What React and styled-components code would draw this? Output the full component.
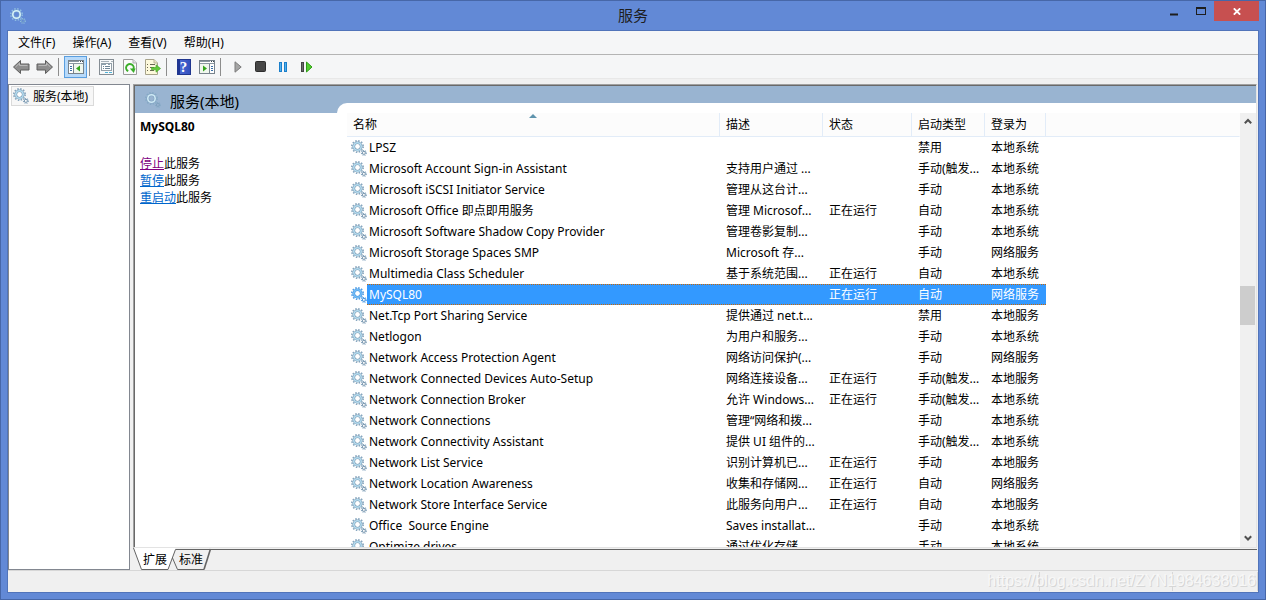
import React from 'react';
import styled, { createGlobalStyle, css } from 'styled-components';

const services = [
	{ name: 'LPSZ', description: '', status: '', startup: '禁用', account: '本地系统' },
	{ name: 'Microsoft Account Sign-in Assistant', description: '支持用户通过 ...', status: '', startup: '手动(触发...', account: '本地系统' },
	{ name: 'Microsoft iSCSI Initiator Service', description: '管理从这台计...', status: '', startup: '手动', account: '本地系统' },
	{ name: 'Microsoft Office 即点即用服务', description: '管理 Microsof...', status: '正在运行', startup: '自动', account: '本地系统' },
	{ name: 'Microsoft Software Shadow Copy Provider', description: '管理卷影复制...', status: '', startup: '手动', account: '本地系统' },
	{ name: 'Microsoft Storage Spaces SMP', description: 'Microsoft 存...', status: '', startup: '手动', account: '网络服务' },
	{ name: 'Multimedia Class Scheduler', description: '基于系统范围...', status: '正在运行', startup: '自动', account: '本地系统' },
	{ name: 'MySQL80', description: '', status: '正在运行', startup: '自动', account: '网络服务' },
	{ name: 'Net.Tcp Port Sharing Service', description: '提供通过 net.t...', status: '', startup: '禁用', account: '本地服务' },
	{ name: 'Netlogon', description: '为用户和服务...', status: '', startup: '手动', account: '本地系统' },
	{ name: 'Network Access Protection Agent', description: '网络访问保护(...', status: '', startup: '手动', account: '网络服务' },
	{ name: 'Network Connected Devices Auto-Setup', description: '网络连接设备...', status: '正在运行', startup: '手动(触发...', account: '本地服务' },
	{ name: 'Network Connection Broker', description: '允许 Windows...', status: '正在运行', startup: '手动(触发...', account: '本地系统' },
	{ name: 'Network Connections', description: '管理“网络和拨...', status: '', startup: '手动', account: '本地系统' },
	{ name: 'Network Connectivity Assistant', description: '提供 UI 组件的...', status: '', startup: '手动(触发...', account: '本地系统' },
	{ name: 'Network List Service', description: '识别计算机已...', status: '正在运行', startup: '手动', account: '本地服务' },
	{ name: 'Network Location Awareness', description: '收集和存储网...', status: '正在运行', startup: '自动', account: '网络服务' },
	{ name: 'Network Store Interface Service', description: '此服务向用户...', status: '正在运行', startup: '自动', account: '本地服务' },
	{ name: 'Office  Source Engine', description: 'Saves installat...', status: '', startup: '手动', account: '本地系统' },
	{ name: 'Optimize drives', description: '通过优化存储...', status: '', startup: '手动', account: '本地系统' },
];

const menus = ['文件(F)', '操作(A)', '查看(V)', '帮助(H)'];

function GearIcon({ tone = 'normal' }) {
	const tones = {
		normal: { teeth: '#86a6bf', ring: '#b4dcf0', edge: '#7796ae', hole: '#fff' },
		selected: { teeth: '#4f9ee6', ring: '#74bff8', edge: '#3f8fdc', hole: '#fff' },
		header: { teeth: '#86aac6', ring: '#cfeaf6', edge: '#7fa2bf', hole: '#99b4d1' },
		title: { teeth: '#8fbce2', ring: '#d6f2fa', edge: '#78a4cc', hole: '#6289d6' },
	};
	const c = tones[tone];

	return (
		<svg width='16' height='16' viewBox='0 0 16 16' aria-hidden='true'>
			<circle cx='6.5' cy='6.5' r='5.7' fill='none' stroke={c.teeth} strokeWidth='1.6' strokeDasharray='1.5 1.484' />
			<circle cx='6.5' cy='6.5' r='5' fill={c.edge} />
			<circle cx='6.5' cy='6.5' r='4.5' fill={c.ring} />
			<circle cx='6.5' cy='6.5' r='2.9' fill={c.edge} />
			<circle cx='6.5' cy='6.5' r='2.4' fill={c.hole} />
			<circle cx='12.9' cy='12.9' r='2.4' fill='none' stroke={c.teeth} strokeWidth='1.2' strokeDasharray='1 0.885' />
			<circle cx='12.9' cy='12.9' r='1.5' fill={c.hole} stroke={c.edge} strokeWidth='1' />
		</svg>
	);
}

function ArrowIcon({ flip }) {
	return (
		<svg width='17' height='16' viewBox='0 0 17 16' aria-hidden='true'>
			<path
				d='M0.5 8 L7.5 1.5 V5 H16 V11 H7.5 V14.5 Z'
				transform={flip ? 'matrix(-1 0 0 1 17 0)' : undefined}
				fill='#8e8e8e'
				stroke='#5e5e5e'
			/>
			<path
				d='M2.5 8 L6.5 4.2 V6.4 H14.5'
				transform={flip ? 'matrix(-1 0 0 1 17 0)' : undefined}
				fill='none'
				stroke='#bdbdbd'
			/>
		</svg>
	);
}

function PaneIcon({ actions }) {
	return (
		<svg width='16' height='14' viewBox='0 0 16 14' shapeRendering='crispEdges' aria-hidden='true'>
			<rect x='0.5' y='0.5' width='15' height='13' fill='#fff' stroke='#78838c' />
			<path d='M1 1.5H11M1 3.5H15' stroke='#8b98a2' />
			<path d='M12 1.5H13M14 1.5H15' stroke='#3c4850' />
			<path d={actions ? 'M10.5 4V13' : 'M5.5 4V13'} stroke='#78838c' />
			<path
				d={actions ? 'M12 6.5H14M12 8.5H14M12 10.5H14' : 'M2 6.5H4M2 8.5H4M2 10.5H4'}
				stroke='#3a6fa8'
			/>
			<rect x={actions ? 1 : 6} y='4' width='9' height='9' fill='#f0f7ee' />
			<path
				d={actions ? 'M4 5.5L8 8.5L4 11.5Z' : 'M12 5.5L8 8.5L12 11.5Z'}
				fill='#35a51d'
				shapeRendering='auto'
			/>
		</svg>
	);
}

function PropertiesIcon() {
	return (
		<svg width='16' height='16' viewBox='0 0 16 16' shapeRendering='crispEdges' aria-hidden='true'>
			<rect x='0.5' y='0.5' width='14' height='15' fill='#f7f9fa' stroke='#858d94' />
			<path d='M2 2.5H10M12 2.5H14' stroke='#a8b2b9' />
			<rect x='2.5' y='4.5' width='10' height='7' fill='#fff' stroke='#93a0a9' />
			<path d='M3 5.5H7M9 5.5H11' stroke='#8aa0ae' />
			<path d='M4 7.5H5M6 7.5H11M4 9.5H5M6 9.5H11' stroke='#6f8797' />
			<path d='M6 13.5H9M10 13.5H13' stroke='#4fb2d8' />
		</svg>
	);
}

function RefreshIcon() {
	return (
		<svg width='14' height='16' viewBox='0 0 14 16' aria-hidden='true'>
			<path d='M0.5 0.5H10L13.5 4V15.5H0.5Z' fill='#fbfbfb' stroke='#9b9b9b' />
			<path d='M10 0.5V4H13.5' fill='#e4e4e4' stroke='#b0b0b0' />
			<path d='M5.2 12.2A3.8 3.8 0 1 1 10.3 10.5' fill='none' stroke='#3cae2b' strokeWidth='2' />
			<path d='M6.8 9.5L12.6 9.5L10.8 14Z' fill='#3cae2b' />
		</svg>
	);
}

function ExportIcon() {
	return (
		<svg width='16' height='16' viewBox='0 0 16 16' aria-hidden='true'>
			<path d='M0.5 0.5H9L12.5 4V15.5H0.5Z' fill='#fdf9dc' stroke='#a8a48c' />
			<path d='M9 0.5V4H12.5' fill='#efe8be' stroke='#b9b49a' />
			<path d='M2 5.5H3M5 5.5H10M2 8.5H3M5 8.5H9M2 11.5H3M5 11.5H9' stroke='#6a6654' />
			<path d='M6.5 8.5H11V5.8L15.6 9.5L11 13.2V10.8H6.5Z' fill='#63c93a' stroke='#43a526' strokeWidth='0.6' />
		</svg>
	);
}

function HelpIcon() {
	return (
		<HelpBadge aria-hidden='true'>?</HelpBadge>
	);
}

function PlayIcon() {
	return (
		<svg width='8' height='12' viewBox='0 0 8 12' aria-hidden='true'>
			<path d='M1 0.8L7.2 6L1 11.2Z' fill='#a5a5a5' stroke='#7c7c7c' />
		</svg>
	);
}

function StopIcon() {
	return (
		<svg width='11' height='11' viewBox='0 0 11 11' aria-hidden='true'>
			<rect x='0.5' y='0.5' width='10' height='10' rx='1' fill='#474747' stroke='#2d2d2d' />
		</svg>
	);
}

function PauseIcon() {
	return (
		<svg width='9' height='10' viewBox='0 0 9 10' shapeRendering='crispEdges' aria-hidden='true'>
			<path d='M0 0H3V10H0ZM5 0H8V10H5Z' fill='#1b7fca' />
			<path d='M1.5 1V9M6.5 1V9' stroke='#4fb0ee' />
		</svg>
	);
}

function RestartIcon() {
	return (
		<svg width='12' height='12' viewBox='0 0 12 12' aria-hidden='true'>
			<rect x='0.5' y='1.5' width='2' height='9' fill='#6b6b6b' stroke='#444' />
			<path d='M5.5 1L11 6L5.5 11Z' fill='#52cf2f' stroke='#2f9e17' />
		</svg>
	);
}

function Chevron({ down }) {
	return (
		<svg width='8' height='7' viewBox='0 0 8 7' aria-hidden='true'>
			<path d={down ? 'M0.8 1.3L4 4.5L7.2 1.3' : 'M0.8 5.2L4 2L7.2 5.2'} fill='none' stroke='#505050' strokeWidth='2' />
		</svg>
	);
}

function TitleBar() {
	return (
		<TitleBarWrapper>
			<TitleSide>
				<GearIcon tone='title' />
			</TitleSide>
			<h1>服务</h1>
			<TitleSide $end>
				<WindowButton aria-label='最小化'>
					<svg width='8' height='9' viewBox='0 0 8 9'>
						<path d='M0 7.5H8' stroke='#1e1e1e' strokeWidth='2' />
					</svg>
				</WindowButton>
				<WindowButton aria-label='最大化'>
					<svg width='10' height='8' viewBox='0 0 10 8' shapeRendering='crispEdges'>
						<path d='M0.5 0V8M9.5 0V8M0 7.5H10' stroke='#1e1e1e' fill='none' />
						<path d='M0 1H10' stroke='#1e1e1e' strokeWidth='2' />
					</svg>
				</WindowButton>
				<WindowButton $close aria-label='关闭'>
					<svg width='8' height='7' viewBox='0 0 8 7'>
						<path d='M0.8 0.3L7.2 6.7M7.2 0.3L0.8 6.7' stroke='#fff' strokeWidth='1.8' />
					</svg>
				</WindowButton>
			</TitleSide>
		</TitleBarWrapper>
	);
}

function Toolbar() {
	return (
		<ToolbarWrapper>
			<ToolButton aria-label='后退'><ArrowIcon /></ToolButton>
			<ToolButton aria-label='前进'><ArrowIcon flip /></ToolButton>
			<Separator />
			<ToolButton $active aria-label='显示/隐藏控制台树'><PaneIcon /></ToolButton>
			<Separator />
			<ToolButton aria-label='属性'><PropertiesIcon /></ToolButton>
			<ToolButton aria-label='刷新'><RefreshIcon /></ToolButton>
			<ToolButton aria-label='导出列表'><ExportIcon /></ToolButton>
			<Separator />
			<ToolButton aria-label='帮助'><HelpIcon /></ToolButton>
			<ToolButton aria-label='显示/隐藏操作窗格'><PaneIcon actions /></ToolButton>
			<Separator />
			<ToolButton aria-label='启动服务'><PlayIcon /></ToolButton>
			<ToolButton aria-label='停止服务'><StopIcon /></ToolButton>
			<ToolButton aria-label='暂停服务'><PauseIcon /></ToolButton>
			<ToolButton aria-label='重启动服务'><RestartIcon /></ToolButton>
		</ToolbarWrapper>
	);
}

function ServiceTable({ selected, onSelect }) {
	return (
		<Table>
			<colgroup>
				<Column $width={373} />
				<Column $width={103} />
				<Column $width={89} />
				<Column $width={73} />
				<Column $width={61} />
				<Column />
			</colgroup>
			<thead>
				<tr>
					<HeadCell>
						名称
						<SortMark width='8' height='4' viewBox='0 0 8 4' aria-hidden='true'>
							<path d='M0 4L4 0L8 4Z' fill='#5f94ad' />
						</SortMark>
					</HeadCell>
					<HeadCell>描述</HeadCell>
					<HeadCell>状态</HeadCell>
					<HeadCell>启动类型</HeadCell>
					<HeadCell>登录为</HeadCell>
					<HeadCell as='td' $last />
				</tr>
			</thead>
			<tbody>
				{services.map(service => {
					const active = service.name === selected;
					return (
						<tr key={service.name} onClick={() => onSelect(service.name)}>
							<NameCell>
								<div>
									<GearIcon tone={active ? 'selected' : 'normal'} />
									<NameLabel $active={active}>{service.name}</NameLabel>
								</div>
							</NameCell>
							<Cell $active={active}>{service.description}</Cell>
							<Cell $active={active}>{service.status}</Cell>
							<Cell $active={active}>{service.startup}</Cell>
							<Cell $active={active}>{service.account}</Cell>
							<Cell />
						</tr>
					);
				})}
			</tbody>
		</Table>
	);
}

export default function App() {
	const [selected, setSelected] = React.useState('MySQL80');

	return (
		<Window>
			<GlobalStyle />
			<TitleBar />
			<Client>
				<MenuBar>
					{menus.map(menu => <MenuButton key={menu}>{menu}</MenuButton>)}
				</MenuBar>
				<Toolbar />
				<Workspace>
					<Tree>
						<TreeItem>
							<GearIcon />
							服务(本地)
						</TreeItem>
					</Tree>
					<Main>
						<Panel>
							<Details>
								<DetailsTitle>
									<GearIcon tone='header' />
									<h2>服务(本地)</h2>
								</DetailsTitle>
								<DetailsBody>
									<h3>{selected}</h3>
									<p><ActionLink href='#stop' $visited>停止</ActionLink>此服务</p>
									<p><ActionLink href='#pause'>暂停</ActionLink>此服务</p>
									<p><ActionLink href='#restart'>重启动</ActionLink>此服务</p>
								</DetailsBody>
							</Details>
							<ListFrame>
								<ListSheet>
									<ListViewport>
										<ServiceTable selected={selected} onSelect={setSelected} />
									</ListViewport>
									<ScrollBar>
										<ScrollButton aria-label='向上滚动'><Chevron /></ScrollButton>
										<ScrollTrack>
											<ScrollThumb />
										</ScrollTrack>
										<ScrollButton aria-label='向下滚动'><Chevron down /></ScrollButton>
									</ScrollBar>
								</ListSheet>
							</ListFrame>
						</Panel>
						<Tabs>
							<TabShapes width='80' height='22' viewBox='0 0 80 22' aria-hidden='true'>
								<path d='M40.5 12L43.5 1.5H78L71 21.5H45.5Z' fill='#f0f0f0' />
								<path d='M0.5 0L8.5 21.5H34.5L42.5 0Z' fill='#fff' />
								<path d='M0.5 0L8.5 21.5H35L42.5 1.5H80' fill='none' stroke='#646464' />
								<path d='M39.5 10L44.5 21.5H71' fill='none' stroke='#646464' />
								<path d='M77.5 1L71 21.5' fill='none' stroke='#646464' strokeWidth='1.6' />
							</TabShapes>
							<TabButton>扩展</TabButton>
							<TabButton>标准</TabButton>
							<TabRule />
						</Tabs>
					</Main>
				</Workspace>
				<StatusBar>
					<StatusPane $grow />
					<StatusPane $width={133} />
					<StatusPane $width={85} />
					<Watermark>https://blog.csdn.net/ZYN1984638016</Watermark>
				</StatusBar>
			</Client>
		</Window>
	);
}

const GlobalStyle = createGlobalStyle`
	* {
		box-sizing: border-box;
	}

	body {
		margin: 0;
		font-family: 'Noto Sans', 'Noto Sans CJK SC', sans-serif;
		font-size: 12px;
		line-height: 17px;
		color: #000;
	}

	button {
		padding: 0;
		border: 0;
		background: none;
		font: inherit;
		color: inherit;
	}

	h1, h2, h3, p {
		margin: 0;
	}

	svg {
		flex: none;
		display: block;
	}
`;

const Window = styled.div`
	display: flex;
	flex-direction: column;
	height: 100vh;
	padding: 0 6px 6px;
	border: 1px solid #4767a8;
	background: #6289d6;
`;

const TitleBarWrapper = styled.header`
	flex: none;
	display: flex;
	align-items: center;
	height: 29px;

	h1 {
		font-size: 15px;
		font-weight: 400;
		color: #1e1e1e;
	}
`;

const TitleSide = styled.div`
	flex: 1;
	align-self: stretch;
	display: flex;
	align-items: ${props => props.$end ? 'flex-start' : 'center'};
	justify-content: ${props => props.$end ? 'flex-end' : 'flex-start'};
	padding-left: 3px;
`;

const WindowButton = styled.button`
	display: flex;
	align-items: center;
	justify-content: center;
	width: ${props => props.$close ? '45px' : '27px'};
	height: 20px;
	background: ${props => props.$close ? '#c75050' : 'transparent'};
`;

const Client = styled.div`
	flex: 1;
	min-height: 0;
	display: flex;
	flex-direction: column;
	border: 1px solid #5174ba;
	background: #f0f0f0;
`;

const MenuBar = styled.nav`
	flex: none;
	display: flex;
	gap: 17px;
	height: 24px;
	padding-left: 10px;
	background: #f5f6f7;
	border-bottom: 1px solid #b4b4b4;
`;

const MenuButton = styled.button`
	white-space: nowrap;
`;

const ToolbarWrapper = styled.div`
	flex: none;
	display: flex;
	align-items: center;
	height: 24px;
	padding-left: 2px;
	background: #f5f6f7;
	border-bottom: 1px solid #e8e8e8;
`;

const ToolButton = styled.button`
	display: flex;
	align-items: center;
	justify-content: center;
	width: 23px;
	height: 22px;

	${props => props.$active && css`
		background: #b8dafa;
		border: 1px solid #5a9fe0;
	`}
`;

const Separator = styled.span`
	width: 8px;
	height: 18px;
	background: linear-gradient(#8d8d8d, #8d8d8d) 2px 0 / 1px 100% no-repeat;
`;

const HelpBadge = styled.span`
	width: 14px;
	height: 16px;
	border: 1px solid #20368f;
	background: linear-gradient(90deg, #1f3594 2px, #4a6ad4 2px, #3350bd);
	color: #fff;
	font-family: 'Liberation Serif', serif;
	font-size: 15px;
	font-weight: 700;
	line-height: 14px;
	text-align: center;
`;

const Workspace = styled.div`
	flex: 1;
	min-height: 0;
	display: flex;
	gap: 3px;
	padding: 5px 1px 0 0;
`;

const Tree = styled.aside`
	flex: none;
	width: 122px;
	padding: 1px 2px;
	border: 1px solid #828790;
	background: #fff;
`;

const TreeItem = styled.div`
	display: flex;
	align-items: center;
	gap: 4px;
	width: 83px;
	height: 20px;
	padding-left: 1px;
	border: 1px solid #dadada;
	background: #f7f7f7;
	white-space: nowrap;
`;

const Main = styled.main`
	flex: 1;
	min-width: 0;
	display: flex;
	flex-direction: column;
`;

const Panel = styled.section`
	flex: 1;
	min-height: 0;
	display: flex;
	border: 1px solid #e3e3e3;
	border-top-color: #a0a0a0;
	border-left-color: #a0a0a0;
	box-shadow: inset 1px 1px #696969;
	padding: 1px 0 0 1px;
	background: #fff;
`;

const Details = styled.div`
	flex: none;
	width: 202px;
`;

const DetailsTitle = styled.div`
	display: flex;
	align-items: center;
	gap: 9px;
	height: 27px;
	padding-left: 10px;
	background: #99b4d1;

	h2 {
		padding-top: 4px;
		font-size: 15px;
		font-weight: 400;
	}
`;

const DetailsBody = styled.div`
	padding: 5px 5px 0;

	h3 {
		margin-bottom: 20px;
		font-size: 12px;
	}
`;

const ActionLink = styled.a`
	color: ${props => props.$visited ? '#800080' : '#0066cc'};
`;

const ListFrame = styled.div`
	flex: 1;
	min-width: 0;
	display: flex;
	padding-top: 17px;
	background: #99b4d1;
`;

const ListSheet = styled.div`
	flex: 1;
	min-width: 0;
	display: flex;
	padding: 10px 0 0 10px;
	border-top-left-radius: 10px;
	background: #fff;
`;

const ListViewport = styled.div`
	flex: 1;
	min-width: 0;
	overflow: hidden;
`;

const Table = styled.table`
	width: 100%;
	table-layout: fixed;
	border-collapse: separate;
	border-spacing: 0;
	white-space: pre;
`;

const Column = styled.col`
	width: ${props => props.$width ? `${props.$width}px` : 'auto'};
`;

const HeadCell = styled.th`
	position: relative;
	height: 24px;
	padding: 0 6px;
	border-right: 1px solid ${props => props.$last ? 'transparent' : '#e2ecf8'};
	border-bottom: 1px solid #e2ecf8;
	background: #fcfcfc;
	font-weight: 400;
	text-align: left;
`;

const SortMark = styled.svg`
	position: absolute;
	top: 1px;
	left: 50%;
	margin-left: -4px;
`;

const focusDots = 'linear-gradient(90deg, #cc6600 1px, #3399ff 1px)';

const selectedRow = css`
	background-color: #3399ff;
	background-image: ${focusDots}, ${focusDots};
	background-position: 0 0, 0 100%;
	background-size: 2px 1px;
	background-repeat: repeat-x;
	color: #fff;
`;

const Cell = styled.td`
	height: 21px;
	padding: 0 6px;
	overflow: hidden;
	${props => props.$active && selectedRow}

	/* keeps the dots in step across columns of odd width */
	&:nth-child(even) {
		background-position: 1px 0, 1px 100%;
	}
`;

const NameCell = styled.td`
	height: 21px;
	padding: 0 0 0 4px;

	div {
		display: flex;
		align-items: center;
		height: 21px;
	}
`;

const NameLabel = styled.span`
	flex: 1;
	height: 21px;
	padding-left: 2px;
	line-height: 21px;
	${props => props.$active && selectedRow}
`;

const ScrollBar = styled.div`
	flex: none;
	display: flex;
	flex-direction: column;
	width: 16px;
	background: #f0f0f0;
`;

const ScrollButton = styled.button`
	flex: none;
	display: flex;
	align-items: center;
	justify-content: center;
	height: 17px;
`;

const ScrollTrack = styled.div`
	flex: 1;
	padding-top: 156px;
`;

const ScrollThumb = styled.div`
	width: 15px;
	height: 39px;
	background: #cdcdcd;
`;

const Tabs = styled.div`
	position: relative;
	flex: none;
	display: flex;
	gap: 12px;
	height: 22px;
	padding-left: 10px;
`;

const TabShapes = styled.svg`
	position: absolute;
	top: 0;
	left: 0;
`;

const TabButton = styled.button`
	position: relative;
	padding-top: 1px;
	white-space: nowrap;
`;

const TabRule = styled.span`
	flex: 1;
	height: 2px;
	margin-left: -12px;
	border-bottom: 1px solid #646464;
`;

const StatusBar = styled.footer`
	position: relative;
	flex: none;
	display: flex;
	height: 22px;
	border-top: 1px solid #d7d7d7;
`;

const StatusPane = styled.div`
	flex: ${props => props.$grow ? 1 : 'none'};
	width: ${props => props.$width ? `${props.$width}px` : 'auto'};
	margin: 1px 0;
	border-right: 1px solid #d7d7d7;
`;

const Watermark = styled.span`
	position: absolute;
	right: 2px;
	top: 0;
	font-family: 'Liberation Sans', sans-serif;
	font-size: 16px;
	line-height: 20px;
	color: #f7f7f7;
	text-shadow: 1px 1px #d6d6d6;
	white-space: nowrap;
`;
